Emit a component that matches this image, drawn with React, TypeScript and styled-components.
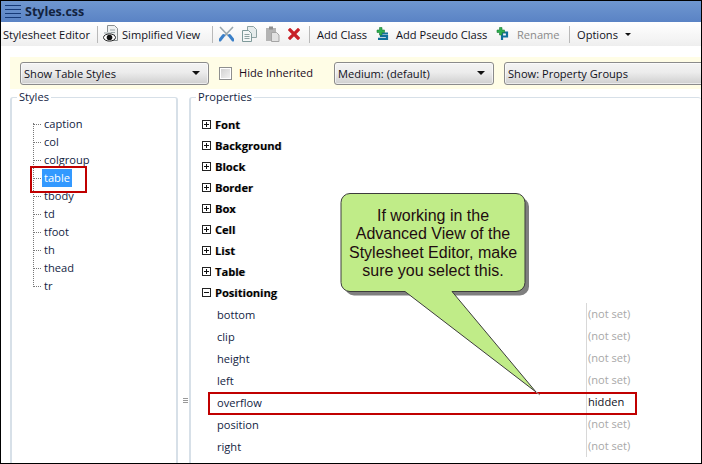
import React from "react";
import styled, { createGlobalStyle } from "styled-components";

const Global = createGlobalStyle`
  html, body { margin: 0; padding: 0; background: #fff; }
  * { box-sizing: border-box; }
`;

const Win = styled.div`
  position: relative;
  width: 702px;
  height: 464px;
  border: 1px solid #000;
  overflow: hidden;
  background: #fff;
  font-family: "Open Sans", "Noto Sans", sans-serif;
  font-size: 11.1px;
  color: #10101a;
  display: flex;
  flex-direction: column;
`;

const TitleBar = styled.div`
  height: 21px;
  flex: none;
  display: flex;
  align-items: center;
  padding-left: 4px;
  gap: 3px;
  background: linear-gradient(#6f97d0, #5a83c5);
  color: #12233f;
  font-weight: 700;
  font-size: 12.5px;
`;

const Toolbar = styled.div`
  height: 24px;
  flex: none;
  display: flex;
  align-items: center;
  padding-left: 2px;
  background: linear-gradient(#fff, #f4f4f4 70%, #eeeeee);
  white-space: nowrap;
`;

const ToolText = styled.span<{ $ml?: number; $off?: boolean; $w: number }>`
  flex: none;
  margin-left: ${(p) => p.$ml ?? 0}px;
  width: ${(p) => p.$w}px;
  color: ${(p) => (p.$off ? "#8a8a8a" : "#10101a")};
`;

const Sep = styled.span<{ $ml: number }>`
  flex: none;
  width: 1px;
  height: 17px;
  margin-left: ${(p) => p.$ml}px;
  background: #b9b9b9;
`;

const ToolIcon = styled.svg<{ $ml: number }>`
  flex: none;
  margin-left: ${(p) => p.$ml}px;
`;

const FilterBar = styled.div`
  margin: 11px 0 0 9px;
  height: 32px;
  flex: none;
  background: #fffde6;
  display: flex;
  align-items: center;
  padding: 0 0 0 10px;
`;

const Select = styled.div<{ $w: number; $ml?: number }>`
  width: ${(p) => p.$w}px;
  flex: none;
  margin-left: ${(p) => p.$ml ?? 0}px;
  height: 23px;
  border: 1px solid #8b8b8b;
  border-radius: 3px;
  background: linear-gradient(#f4f4f4, #ececec 45%, #cfcfcf);
  box-shadow: inset 0 0 0 1px rgba(255, 255, 255, 0.6);
  display: flex;
  align-items: center;
  justify-content: space-between;
  padding: 0 8px 0 3px;
`;

const Caret = styled.span<{ $small?: boolean }>`
  flex: none;
  width: 0;
  height: 0;
  margin-left: ${(p) => (p.$small ? 6 : 0)}px;
  border-style: solid;
  border-color: #111 transparent transparent;
  border-width: ${(p) => (p.$small ? "3px 3px 0" : "4px 4px 0")};
`;

const Check = styled.span`
  width: 13px;
  height: 13px;
  flex: none;
  margin-left: 10px;
  border: 1px solid #8e8f8f;
  background: linear-gradient(135deg, #cfcfcf, #f4f4f4);
  box-shadow: inset 0 0 0 1px #fff;
`;

const CheckLabel = styled.span`
  flex: none;
  margin: -2px 0 0 7px;
  width: 95px;
  color: #1a0a1c;
`;

const Panels = styled.div`
  flex: 1;
  display: flex;
  margin: 1px 0 0 9px;
  min-height: 0;
`;

const Group = styled.fieldset<{ $w?: number; $ml?: number }>`
  margin: 0 0 -3px ${(p) => p.$ml ?? 0}px;
  padding: 0;
  min-width: 0;
  width: ${(p) => (p.$w ? `${p.$w}px` : "auto")};
  flex: ${(p) => (p.$w ? "none" : "1")};
  border: 2px solid #d7e0e8;
  border-right-width: ${(p) => (p.$w ? 2 : 0)}px;
  border-bottom-width: 0;
  border-top-width: 1px;
  border-top-left-radius: 3px;
  border-top-right-radius: 3px;
  position: relative;
`;

const Legend = styled.legend`
  margin-left: 5px;
  padding: 0 2px;
  line-height: 14px;
  color: #12233f;
`;

const Tree = styled.ul`
  list-style: none;
  margin: 11px 0 0 21px;
  padding: 0;
  position: relative;
  &::before {
    content: "";
    position: absolute;
    left: 0;
    top: 8px;
    height: 162px;
    border-left: 1px dotted #777;
  }
`;

const TreeRow = styled.li`
  height: 18px;
  display: flex;
  align-items: center;
  &::before {
    content: "";
    width: 8px;
    margin-right: 3px;
    border-top: 1px dotted #777;
  }
`;

const TreeLabel = styled.span<{ $sel?: boolean }>`
  padding: 0 ${(p) => (p.$sel ? 2 : 0)}px;
  margin-left: ${(p) => (p.$sel ? -2 : 0)}px;
  line-height: 18px;
  background: ${(p) => (p.$sel ? "#3399ff" : "transparent")};
  color: ${(p) => (p.$sel ? "#fff" : "#12233f")};
`;

const RedBox = styled.span`
  position: absolute;
  border: 2px solid #c00000;
  pointer-events: none;
`;

const TableMark = styled(RedBox)`
  left: 18px;
  top: 62px;
  width: 57px;
  height: 27px;
`;

const Grip = styled.span`
  position: absolute;
  left: 171px;
  top: 294px;
  width: 5px;
  height: 5px;
  border-top: 1px solid #999;
  border-bottom: 1px solid #999;
  &::after {
    content: "";
    display: block;
    margin-top: 1px;
    height: 1px;
    background: #999;
  }
`;

const PropList = styled.div`
  margin: 10px 0 0 11px;
  position: relative;
`;

const Cat = styled.div`
  height: 21px;
  display: flex;
  align-items: center;
  gap: 4px;
  font-weight: 700;
  color: #000;
  text-shadow: 1px 0 0 rgba(120, 120, 120, 0.35);
`;

const PlusBox = styled.span<{ $open?: boolean }>`
  width: 9px;
  height: 9px;
  flex: none;
  border: 1px solid #222;
  position: relative;
  &::before {
    content: "";
    position: absolute;
    left: 1px;
    right: 1px;
    top: 3px;
    height: 1px;
    background: #111;
  }
  &::after {
    content: "";
    display: ${(p) => (p.$open ? "none" : "block")};
    position: absolute;
    top: 1px;
    bottom: 1px;
    left: 3px;
    width: 1px;
    background: #111;
  }
`;

const PropRow = styled.div`
  height: 22px;
  display: flex;
  align-items: center;
  padding-left: 15px;
  color: #12233f;
`;

const PropName = styled.span`
  width: 369px;
  flex: none;
`;

const PropValue = styled.span<{ $set?: boolean }>`
  height: 22px;
  line-height: 22px;
  padding-left: 1px;
  border-left: 1px solid #d8d8d8;
  color: ${(p) => (p.$set ? "#10101a" : "#a8a8a8")};
`;

const OverflowMark = styled(RedBox)`
  left: 6px;
  top: 278px;
  width: 429px;
  height: 23px;
`;

const Callout = styled.div`
  position: absolute;
  left: 334px;
  top: 186px;
  width: 210px;
  height: 212px;
`;

const CalloutText = styled.div`
  position: absolute;
  left: 5px;
  top: 20px;
  width: 186px;
  text-align: center;
  font-family: "Liberation Sans", Arial, sans-serif;
  font-size: 16px;
  line-height: 18.3px;
  color: #1f0c10;
`;

const Eye = () => (
  <ToolIcon $ml={5} width="15" height="18" viewBox="0 0 15 18">
    <path d="M4.5.5h7l3 3v12h-10z" fill="#eef0f0" stroke="#8a8f90" />
    <path d="M7 5h5M7 7.5h5M7 10h5" stroke="#9aa5a8" />
    <path d="M1 7h7v2H1z" fill="#c8ced0" />
    <ellipse cx="6.5" cy="12.5" rx="6" ry="3.6" fill="#fff" stroke="#222" />
    <circle cx="6.500" cy="12.5" r="2.800" fill="#111" />
  </ToolIcon>
);

const Scissors = () => (
  <ToolIcon $ml={6} width="15" height="16" viewBox="0 0 15 16">
    <path d="M1 1l8.5 9M14 1L5.500 10" stroke="#9aa7ad" strokeWidth="1.600" />
    <path d="M4.500 9.500L1 14M10.500 9.500L14 14" stroke="#3a7fc8" strokeWidth="3" strokeLinecap="round" />
  </ToolIcon>
);

const Copy = () => (
  <ToolIcon $ml={8} width="15" height="16" viewBox="0 0 15 16">
    <path d="M5.500.5h6l3 3v8h-9z" fill="#e6ecec" stroke="#8fa3a3" />
    <path d="M.5 4.500h6l3 3v8h-9z" fill="#f4f7f7" stroke="#7f9a9a" />
    <path d="M2.500 8.500h5M2.500 10.500h5M2.500 12.500h5" stroke="#8fa3a3" />
  </ToolIcon>
);

const Paste = () => (
  <ToolIcon $ml={8} width="15" height="16" viewBox="0 0 15 16">
    <path d="M1 2h10v13H1z" fill="#b4b4b4" />
    <path d="M4 .5h4v3H4z" fill="#8f8f8f" />
    <path d="M6.500 6.500h5l2.500 2.500v6.500H6.500z" fill="#e2e2e2" stroke="#a5a5a5" />
  </ToolIcon>
);

const Del = () => (
  <ToolIcon $ml={8} width="12" height="12" viewBox="0 0 12 12">
    <path d="M2 2l8 8M10 2l-8 8" stroke="#c81f26" strokeWidth="3.200" strokeLinecap="square" />
  </ToolIcon>
);

const AddGlyph = ({ ml, letter }: { ml: number; letter: "s" | "p" }) => (
  <ToolIcon $ml={ml} width="13" height="14" viewBox="0 0 13 14">
    {letter === "s" ? (
      <path d="M12 6.500H5v2.500h6v2.800H2" fill="none" stroke="#0f6f9c" strokeWidth="2.200" />
    ) : (
      <path d="M6 13V5.500h5v4H6" fill="none" stroke="#0f6f9c" strokeWidth="2.200" />
    )}
    <path d="M3.500 0.500h2.500v2.500h2.500v2.500H6v2.500H3.500V5.500H1V3h2.500z" fill="#2fb04f" stroke="#1d7d38" strokeWidth=".6" />
  </ToolIcon>
);

const Menu = () => (
  <svg width="17" height="16" viewBox="0 0 17 16">
    <path d="M0 1.500h16M0 5.500h16M0 9.500h16M0 13.500h16" stroke="#163a78" strokeWidth="1" />
  </svg>
);

const styles = ["caption", "col", "colgroup", "table", "tbody", "td", "tfoot", "th", "thead", "tr"];
const cats = ["Font", "Background", "Block", "Border", "Box", "Cell", "List", "Table"];
const props: [string, string][] = [
  ["bottom", "(not set)"],
  ["clip", "(not set)"],
  ["height", "(not set)"],
  ["left", "(not set)"],
  ["overflow", "hidden"],
  ["position", "(not set)"],
  ["right", "(not set)"],
];

const bubble =
  "M15 6.500H181a9 9 0 0 1 9 9V95.500a9 9 0 0 1-9 9H117L201 205 70 104.500H15a9 9 0 0 1-9-9V15.500a9 9 0 0 1 9-9z";
const boxShadow =
  "M15 6.500H181a9 9 0 0 1 9 9V95.500a9 9 0 0 1-9 9H15a9 9 0 0 1-9-9V15.500a9 9 0 0 1 9-9z";

export default function App() {
  return (
    <Win>
      <Global />
      <TitleBar>
        <Menu />
        Styles.css
      </TitleBar>
      <Toolbar>
        <ToolText $w={87}>Stylesheet Editor</ToolText>
        <Sep $ml={7} />
        <Eye />
        <ToolText $ml={4} $w={81}>Simplified View</ToolText>
        <Sep $ml={9} />
        <Scissors />
        <Copy />
        <Paste />
        <Del />
        <Sep $ml={9} />
        <ToolText $ml={7} $w={52}>Add Class</ToolText>
        <AddGlyph ml={7} letter="s" />
        <ToolText $ml={7} $w={94}>Add Pseudo Class</ToolText>
        <AddGlyph ml={6} letter="p" />
        <ToolText $ml={8} $off $w={43}>Rename</ToolText>
        <Sep $ml={9} />
        <ToolText $ml={7} $w={42}>Options</ToolText>
        <Caret $small />
      </Toolbar>
      <FilterBar>
        <Select $w={189}>
          Show Table Styles
          <Caret />
        </Select>
        <Check />
        <CheckLabel>Hide Inherited</CheckLabel>
        <Select $w={160}>
          Medium: (default)
          <Caret />
        </Select>
        <Select $w={210} $ml={10}>
          Show: Property Groups
        </Select>
      </FilterBar>
      <Panels>
        <Group $w={168}>
          <Legend>Styles</Legend>
          <Tree>
            {styles.map((s) => (
              <TreeRow key={s}>
                <TreeLabel $sel={s === "table"}>{s}</TreeLabel>
              </TreeRow>
            ))}
          </Tree>
          <TableMark />
          <Grip />
        </Group>
        <Group $ml={11}>
          <Legend>Properties</Legend>
          <PropList>
            {cats.map((c) => (
              <Cat key={c}>
                <PlusBox />
                {c}
              </Cat>
            ))}
            <Cat>
              <PlusBox $open />
              Positioning
            </Cat>
            {props.map(([n, v]) => (
              <PropRow key={n}>
                <PropName>{n}</PropName>
                <PropValue $set={v === "hidden"}>{v}</PropValue>
              </PropRow>
            ))}
            <OverflowMark />
          </PropList>
        </Group>
      </Panels>
      <Callout>
        <svg width="210" height="212" viewBox="0 0 210 212">
          <path d={boxShadow} transform="translate(4 4)" fill="#7f7f7f" />
          <path d="M201 205l4 3" stroke="#999" strokeWidth="1" />
          <path d={bubble} fill="#c0ec88" stroke="#3c3c3c" strokeWidth="1" />
        </svg>
        <CalloutText>
          If working in the
          <br />
          Advanced View of the
          <br />
          Stylesheet Editor, make
          <br />
          sure you select this.
        </CalloutText>
      </Callout>
    </Win>
  );
}
